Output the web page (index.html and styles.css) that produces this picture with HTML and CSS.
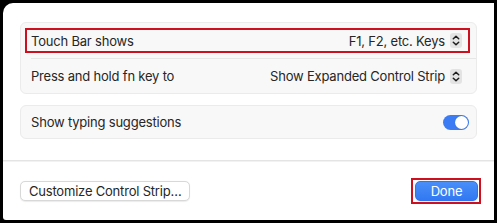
FILE: index.html
```html
<!DOCTYPE html>
<html>
<head>
<meta charset="utf-8">
<link rel="stylesheet" href="styles.css">
</head>
<body>
<div class="window">
  <div class="content">
    <div class="card">
      <div class="row highlight">
        <span class="label">Touch Bar shows</span>
        <span class="value">F1, F2, etc. Keys
          <span class="stepper"><svg width="12" height="15" viewBox="0 0 12 15"><path d="M3.3 5.8 L6 3.2 L8.7 5.8" fill="none" stroke="#1e1e1e" stroke-width="1.5" stroke-linecap="round" stroke-linejoin="round"/><path d="M3.3 9.2 L6 11.8 L8.7 9.2" fill="none" stroke="#1e1e1e" stroke-width="1.5" stroke-linecap="round" stroke-linejoin="round"/></svg></span>
        </span>
      </div>
      <div class="sep"></div>
      <div class="row">
        <span class="label">Press and hold fn key to</span>
        <span class="value">Show Expanded Control Strip
          <span class="stepper"><svg width="12" height="15" viewBox="0 0 12 15"><path d="M3.3 5.8 L6 3.2 L8.7 5.8" fill="none" stroke="#1e1e1e" stroke-width="1.5" stroke-linecap="round" stroke-linejoin="round"/><path d="M3.3 9.2 L6 11.8 L8.7 9.2" fill="none" stroke="#1e1e1e" stroke-width="1.5" stroke-linecap="round" stroke-linejoin="round"/></svg></span>
        </span>
      </div>
    </div>
    <div class="card">
      <div class="row row-single">
        <span class="label">Show typing suggestions</span>
        <span class="toggle"><span class="knob"></span></span>
      </div>
    </div>
  </div>
  <div class="divider"></div>
  <div class="footer">
    <button class="btn">Customize Control Strip…</button>
    <button class="btn btn-primary">Done</button>
  </div>
</div>
</body>
</html>
```
FILE: styles.css
```css
html, body {
  margin: 0;
  padding: 0;
  background: #000;
  width: 497px;
  height: 223px;
  overflow: hidden;
  font-family: Inter, "Liberation Sans", sans-serif;
  font-size: 13px;
  letter-spacing: -0.2px;
  color: #262626;
}
.window {
  margin: 3px;
  height: 217px;
  background: #fff;
  border-radius: 10px 0 0 3px;
  display: flex;
  flex-direction: column;
}
.content {
  padding: 19px 17px 0 17px;
  display: flex;
  flex-direction: column;
  gap: 11px;
}
.card {
  background: #f8f8f8;
  border: 1px solid #ebebeb;
  border-radius: 6px;
}
.row {
  height: 35px;
  padding: 0 14px 0 10px;
  display: flex;
  align-items: center;
  justify-content: space-between;
  position: relative;
}
.row + .sep + .row {
  height: 34px;
}
.row-single {
  height: 32px;
  padding-right: 7px;
}
.sep {
  height: 1px;
  background: #e6e6e6;
  margin: 0 0 0 10px;
}
.highlight::after {
  content: "";
  position: absolute;
  left: 4px;
  right: 6px;
  top: 5px;
  bottom: 5px;
  border: 2px solid #cc1020;
}
.value {
  display: flex;
  align-items: center;
  gap: 5px;
}
.stepper {
  width: 12px;
  height: 15px;
  background: #e3e3e3;
  border-radius: 3px;
  display: flex;
}
.toggle {
  width: 26px;
  height: 15px;
  border-radius: 8px;
  background: #3b7cf4;
  display: flex;
  justify-content: flex-end;
  align-items: center;
  padding: 0 1px;
  box-sizing: border-box;
}
.knob {
  width: 13px;
  height: 13px;
  border-radius: 50%;
  background: #fff;
  box-shadow: 0 0 1px rgba(0,0,0,0.3);
}
.divider {
  margin-top: 21px;
  height: 1px;
  background: #e4e4e4;
  box-shadow: 0 1px 0 #f2f2f2;
}
.footer {
  padding: 20px 16px 0 17px;
  display: flex;
  justify-content: space-between;
}
.btn {
  font-family: Inter, "Liberation Sans", sans-serif;
  font-size: 13px;
  letter-spacing: -0.2px;
  color: #262626;
  height: 20px;
  padding: 0 8px;
  background: #fff;
  border: 1px solid #d8d8d8;
  border-radius: 5px;
  box-shadow: 0 0.5px 1px rgba(0,0,0,0.08);
  line-height: 18px;
  margin: 0;
}
.btn-primary {
  width: 63px;
  color: #fff;
  background: linear-gradient(#4a8ef9, #3179f2);
  border: 1px solid #2f74ea;
  position: relative;
}
.btn-primary::after {
  content: "";
  position: absolute;
  left: -5px;
  right: -4px;
  top: -4px;
  bottom: -4px;
  border: 2px solid #cc1020;
}
```
